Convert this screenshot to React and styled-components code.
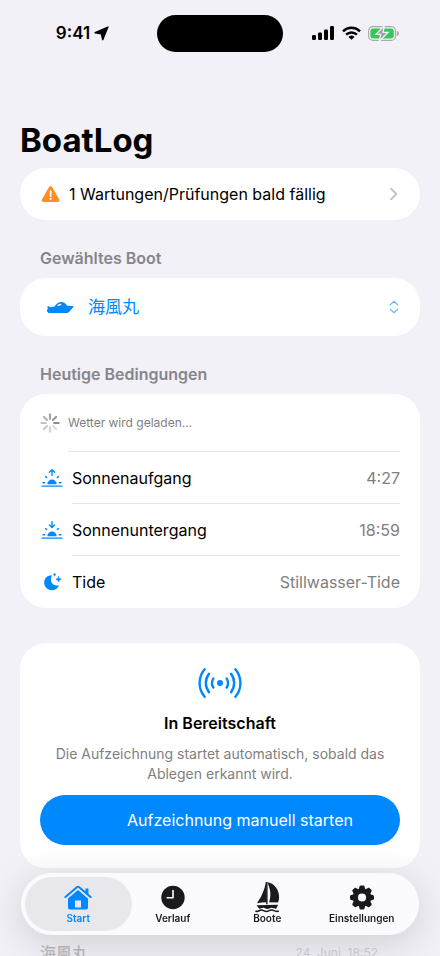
import React from "react";
import styled, { createGlobalStyle } from "styled-components";

const blue = "#0088ff";

const Global = createGlobalStyle`
  *, *::before, *::after { box-sizing: border-box; }
  body {
    margin: 0;
    background: #f2f1f7;
    color: #000;
    font-family: Inter, "Noto Sans CJK JP", sans-serif;
    font-size: 16px;
    line-height: 20px;
  }
  h1, h2, h3, p { margin: 0; padding: 0; }
  svg { display: block; flex: none; }
`;

const Screen = styled.div`
  height: 100vh;
  overflow: hidden;
`;

const StatusBar = styled.header`
  display: grid;
  grid-template-columns: 1fr 126px 1fr;
  align-items: center;
  height: 66px;
  padding: 0 20px;
`;

const Clock = styled.div`
  display: flex;
  align-items: center;
  justify-content: center;
  gap: 4px;
  padding-right: 12px;
  font-size: 17px;
  font-weight: 600;
`;

const Island = styled.div`
  height: 37px;
  border-radius: 19px;
  background: #000;
`;

const Indicators = styled.div`
  display: flex;
  align-items: center;
  justify-content: center;
  gap: 7px;
  padding-left: 8px;
`;

const Content = styled.main`
  display: flex;
  flex-direction: column;
  padding: 54px 20px 0;
`;

const PageTitle = styled.h1`
  height: 48px;
  font-size: 33px;
  line-height: 41px;
  font-weight: 700;
`;

const Card = styled.section`
  background: #fff;
  border-radius: 26px;
`;

const SectionTitle = styled.h2`
  padding: 28px 20px 10px;
  font-size: 16px;
  font-weight: 600;
  color: #86858b;
`;

const AlertRow = styled.a`
  display: flex;
  align-items: center;
  gap: 8px;
  height: 52px;
  padding: 0 20px 0 21px;
  color: inherit;
  text-decoration: none;
`;

const Grow = styled.span`
  flex: 1;
`;

const BoatButton = styled.button`
  display: flex;
  align-items: center;
  gap: 14px;
  width: 100%;
  height: 58px;
  padding: 0 20px 0 26px;
  border: 0;
  background: none;
  color: ${blue};
  font: inherit;
  font-size: 17px;
  text-align: left;
`;

const Row = styled.div`
  display: flex;
  align-items: center;
  gap: ${(p) => p.$gap}px;
  padding: 0 20px;
`;

const RowBody = styled.div`
  display: flex;
  flex: 1;
  align-items: center;
  justify-content: space-between;
  height: ${(p) => p.$height}px;
  border-bottom: ${(p) => (p.$last ? "0" : "1px solid #e6e6e6")};
`;

const Value = styled.span`
  color: #808080;
`;

const Loading = styled.span`
  font-size: 12px;
  color: #808080;
`;

const StandbyCard = styled(Card)`
  display: flex;
  flex-direction: column;
  align-items: center;
  margin-top: 35px;
  padding: 24px 20px 23px;
  text-align: center;
`;

const StandbyTitle = styled.h3`
  margin: 14px 0 11px;
  font-size: 16px;
  font-weight: 600;
`;

const StandbyText = styled.p`
  font-size: 14px;
  color: #808080;
`;

const PrimaryButton = styled.button`
  width: 100%;
  height: 50px;
  margin-top: 11px;
  padding: 0 0 0 40px;
  border: 0;
  border-radius: 25px;
  background: ${blue};
  color: #fff;
  font: inherit;
`;

const TripRow = styled.div`
  display: flex;
  align-items: center;
  justify-content: space-between;
  padding: 75px 42px 0 20px;
`;

const TripName = styled.span`
  font-weight: 500;
  color: #bcbbc0;
`;

const TripDate = styled.time`
  font-size: 12px;
  color: #d0cfd5;
`;

const TabBar = styled.nav`
  position: fixed;
  left: 21px;
  right: 21px;
  bottom: 21px;
  display: grid;
  grid-template-columns: repeat(4, 1fr);
  height: 62px;
  padding: 4px 10px;
  border-radius: 31px;
  background: #fbfafe;
  box-shadow: 0 8px 40px rgba(0, 0, 0, 0.15);
`;

const Tab = styled.a`
  display: flex;
  flex-direction: column;
  align-items: center;
  justify-content: flex-end;
  gap: 1px;
  margin: 0 ${(p) => (p.$active ? "-6px" : "0")};
  padding-bottom: 6px;
  border-radius: 27px;
  background: ${(p) => (p.$active ? "#e8e7ec" : "transparent")};
  color: ${(p) => (p.$active ? blue : "#1a1a1e")};
  font-size: 10px;
  line-height: 13px;
  font-weight: 600;
  text-decoration: none;
`;

const TabIcon = styled.span`
  display: flex;
  align-items: center;
  height: 26px;
`;

const LocationIcon = () => (
  <svg width="15" height="15" viewBox="0 0 15 15" fill="#000" stroke="#000" strokeWidth="1.400" strokeLinejoin="round">
    <path d="M13.900 1.100 8.700 13.700 7.300 7.700 1.100 6.700Z" />
  </svg>
);

const SignalIcon = () => (
  <svg width="23" height="14" viewBox="0 0 23 14" fill="#000">
    <rect x="0" y="9" width="4" height="5" rx="1.200" />
    <rect x="6" y="6.500" width="4" height="7.500" rx="1.200" />
    <rect x="12" y="3.500" width="4" height="10.500" rx="1.200" />
    <rect x="18" y="0" width="4" height="14" rx="1.200" />
  </svg>
);

const WifiIcon = () => (
  <svg width="19" height="14" viewBox="0 0 19 14" fill="none" stroke="#000" strokeWidth="2.500">
    <path d="M1 5.300a12.200 12.200 0 0 1 17 0" />
    <path d="M4.100 8.600a7.800 7.800 0 0 1 10.800 0" />
    <path d="M9.500 13.800 6.500 10.900a4.400 4.400 0 0 1 6 0Z" fill="#000" stroke="none" />
  </svg>
);

const BatteryIcon = () => (
  <svg width="32" height="15" viewBox="0 0 32 15">
    <rect x=".6" y=".6" width="27" height="13.800" rx="4.500" fill="none" stroke="#a9a9ad" strokeWidth="1.200" />
    <rect x="2.400" y="2.400" width="23.400" height="10.200" rx="3" fill="#34c759" />
    <path d="M29 5v5c1.200-.3 2-1.300 2-2.500S30.200 5.300 29 5Z" fill="#a9a9ad" />
    <path d="M16.300-.2 8 8.300h4.700l-1.500 7 8.800-8.900h-4.900Z" fill="#a0a0a3" stroke="#f2f1f7" strokeWidth="1.300" />
  </svg>
);

const WarningIcon = () => (
  <svg width="20" height="17" viewBox="0 0 20 17">
    <path d="M7.900 1.300a1.900 1.900 0 0 1 3.400 0l7 12.200c.7 1.300-.1 2.500-1.600 2.500H2.500C1 16 .2 14.800.9 13.500Z" fill="#ff8d28" />
    <path d="M9.600 5.200v5" stroke="#fff" strokeWidth="1.700" strokeLinecap="round" />
    <circle cx="9.600" cy="12.900" r="1.050" fill="#fff" />
  </svg>
);

const ChevronIcon = () => (
  <svg width="12" height="14" viewBox="0 0 12 14" fill="none" stroke="#c2c2c6" strokeWidth="1.900" strokeLinecap="round" strokeLinejoin="round">
    <path d="m3 1.700 5.300 5.300L3 12.300" />
  </svg>
);

const UpDownIcon = () => (
  <svg width="12" height="14" viewBox="0 0 12 14" fill="none" stroke="#66b8ff" strokeWidth="1.200" strokeLinecap="round" strokeLinejoin="round">
    <path d="m2.200 4.900 3.800-3.700 3.800 3.700M2.200 9.100 6 12.800l3.800-3.700" />
  </svg>
);

const MotorboatIcon = () => (
  <svg width="28" height="14" viewBox="0 0 28 14" fill={blue}>
    <path fillRule="evenodd" d="M1.200 6.500 3 6.300l1.200 1 4.400-.9c2-2.500 3.800-4.200 6.800-4.300 2.500 0 4.300 1.500 5.700 3.700l6.300.3c.3 0 .4.300.2.500-1.600 2-3 4.300-4.600 5.300H1.400l-.5-2.100 1-.8Zm9.600-.6 3.600-.3 1.200-1.700c-1.900-.3-3.500.5-4.800 2Z" />
    <path d="M1.500 11.500h21.800l-1.700 1.600H2.500Z" />
  </svg>
);

const Spinner = () => {
  const tones = ["#a6a6a6", "#999", "#8b8b8d", "#dcdcdc", "#d5d5d5", "#cbcbcb", "#c2c2c2", "#b5b5b5"];
  return (
    <svg width="20" height="20" viewBox="0 0 20 20" strokeWidth="2.200" strokeLinecap="round">
      {tones.map((tone, i) => (
        <path key={tone} d="M10 1.400v4.400" stroke={tone} transform={`rotate(${i * 45} 10 10)`} />
      ))}
    </svg>
  );
};

const SunIcon = ({ down }) => (
  <svg width="23" height="18" viewBox="0 0 23 18" fill="none" stroke={blue} strokeWidth="1.400" strokeLinecap="round" strokeLinejoin="round">
    <path d="M2 17.100h20" />
    <path d="M7.300 15.300a4.700 4.700 0 1 1 9.400 0Z" fill={blue} stroke="none" />
    <path d="M3 13.700h1.700M19.300 13.700H21M5.600 7.500l1.100 1.100M18.400 7.500l-1.100 1.100" />
    <path d={down ? "M12 .8v5.600M9.400 4.100 12 6.600l2.600-2.500" : "M12 6.600V1M9.400 3.300 12 .8l2.600 2.500"} />
  </svg>
);

const MoonIcon = () => (
  <svg width="23" height="18" viewBox="-1 0 23 18" fill={blue}>
    <path d="M10.200 2.300C6.200 2.400 3.200 5.700 3.200 9.600c0 4.200 3.300 7.600 7.500 7.600 3.300 0 6.100-1.800 7.100-4.500.1-.4-.2-.6-.5-.5-5 1.400-9-3.100-6.600-9.200.1-.4-.1-.7-.5-.7Z" />
    <path d="M17.600 3.400c.4 1.900.7 2.300 2.700 2.800-2 .5-2.300.9-2.700 2.800-.4-1.900-.7-2.300-2.700-2.800 2-.5 2.300-.9 2.700-2.800Z" stroke={blue} strokeWidth=".7" />
    <path d="M13.600.2c.2 1 .5 1.300 1.500 1.500-1 .2-1.300.5-1.500 1.500-.2-1-.5-1.300-1.500-1.500 1-.2 1.300-.5 1.500-1.500Z" stroke={blue} strokeWidth=".5" />
  </svg>
);

const RadioIcon = () => (
  <svg width="46" height="32" viewBox="0 0 46 32" fill="none" stroke={blue} strokeWidth="2.400" strokeLinecap="round">
    <circle cx="23" cy="16" r="3" fill={blue} stroke="none" />
    <path d="M16.400 11.400a8.600 8.600 0 0 0 0 9.200M29.600 11.400a8.600 8.600 0 0 1 0 9.200" />
    <path d="M12 6.800a15 15 0 0 0 0 18.400M34 6.800a15 15 0 0 1 0 18.400" />
    <path d="M7.600 2.200a21.500 21.500 0 0 0 0 27.600M38.400 2.200a21.500 21.500 0 0 1 0 27.600" />
  </svg>
);

const HouseIcon = () => (
  <svg width="28" height="26" viewBox="0 0 28 26" fill={blue}>
    <path d="M1.400 12 13.100 2.100c.6-.5 1.200-.5 1.800 0L26.600 12" fill="none" stroke={blue} strokeWidth="2" strokeLinecap="round" />
    <path d="M21.500 3.400h2.900v7l-2.900-2.500Z" />
    <path fillRule="evenodd" d="M14 5 24 13.400v9c0 1.200-.8 2-2 2H6c-1.200 0-2-.8-2-2v-9Zm-3 10.500v7h6v-7Z" />
  </svg>
);

const ClockIcon = () => (
  <svg width="26" height="26" viewBox="0 0 26 26">
    <circle cx="13" cy="12.500" r="11.700" fill="#1a1a1e" />
    <path d="M13 5.500v7.300H7.200" fill="none" stroke="#fff" strokeWidth="1.600" strokeLinecap="round" strokeLinejoin="round" />
  </svg>
);

const SailboatIcon = () => (
  <svg width="27" height="33" viewBox="0 1 28 34" fill="#1a1a1e">
    <path d="M14.200 1.200C21.400 2.200 26.500 10 26 17.500c0 2-.6 3.600-1.200 4.600l-9.200-.2c2-5 1.800-12-.4-17Z" />
    <path d="M13 1v21c-3.300 0-6.500.3-9.900.9C7 17.500 11 10 12.200 1Z" />
    <path d="M12.600 1h1.500v23h-1.500Z" />
    <path d="m2.600 25 22.400-.5-1.900 3.900c-1.500.7-2.700-.7-4.500-.7-2.200 0-2.700 1.300-4.600 1.300s-2.500-1.300-4.500-1.300c-1.700 0-2.600 1.100-4.100.9Z" />
    <path d="M2 31.200c2.200.8 3.300-.9 5.300-1.300 2-.3 3.200 1.600 5.600 1.600s3.300-1.900 5.600-1.600c2.200.3 3.600 2 6.700 1.300" fill="none" stroke="#1a1a1e" strokeWidth="1.600" strokeLinecap="round" />
  </svg>
);

const GearIcon = () => (
  <svg width="26" height="26" viewBox="0 0 26 26">
    <g fill="#1a1a1e">
      {[0, 45, 90, 135, 180, 225, 270, 315].map((a) => (
        <path key={a} d="m9.700 4.500.8-2.900c.2-.7.600-1.100 1.300-1.100h2.400c.7 0 1.100.4 1.300 1.100l.8 2.900Z" transform={`rotate(${a} 13 12.500)`} />
      ))}
    </g>
    <circle cx="13" cy="12.500" r="6.700" fill="none" stroke="#1a1a1e" strokeWidth="5.200" />
  </svg>
);

const conditions = [
  { icon: <SunIcon />, label: "Sonnenaufgang", value: "4:27" },
  { icon: <SunIcon down />, label: "Sonnenuntergang", value: "18:59" },
  { icon: <MoonIcon />, label: "Tide", value: "Stillwasser-Tide" },
];

const tabs = [
  { icon: <HouseIcon />, label: "Start" },
  { icon: <ClockIcon />, label: "Verlauf" },
  { icon: <SailboatIcon />, label: "Boote" },
  { icon: <GearIcon />, label: "Einstellungen" },
];

export default function App() {
  return (
    <Screen>
      <Global />
      <StatusBar>
        <Clock>9:41<LocationIcon /></Clock>
        <Island />
        <Indicators><SignalIcon /><WifiIcon /><BatteryIcon /></Indicators>
      </StatusBar>
      <Content>
        <PageTitle>BoatLog</PageTitle>
        <Card>
          <AlertRow href="#wartung">
            <WarningIcon />
            <Grow>1 Wartungen/Prüfungen bald fällig</Grow>
            <ChevronIcon />
          </AlertRow>
        </Card>
        <SectionTitle>Gewähltes Boot</SectionTitle>
        <Card>
          <BoatButton type="button">
            <MotorboatIcon />
            <Grow>海風丸</Grow>
            <UpDownIcon />
          </BoatButton>
        </Card>
        <SectionTitle>Heutige Bedingungen</SectionTitle>
        <Card>
          <Row $gap={8}>
            <Spinner />
            <RowBody $height={58}><Loading>Wetter wird geladen…</Loading></RowBody>
          </Row>
          {conditions.map((c, i) => (
            <Row key={c.label} $gap={9}>
              {c.icon}
              <RowBody $height={52} $last={i === conditions.length - 1}>
                <span>{c.label}</span>
                <Value>{c.value}</Value>
              </RowBody>
            </Row>
          ))}
        </Card>
        <StandbyCard>
          <RadioIcon />
          <StandbyTitle>In Bereitschaft</StandbyTitle>
          <StandbyText>Die Aufzeichnung startet automatisch, sobald das Ablegen erkannt wird.</StandbyText>
          <PrimaryButton type="button">Aufzeichnung manuell starten</PrimaryButton>
        </StandbyCard>
        <TripRow>
          <TripName>海風丸</TripName>
          <TripDate>24. Juni, 18:52</TripDate>
        </TripRow>
      </Content>
      <TabBar>
        {tabs.map((t, i) => (
          <Tab key={t.label} href={`#${t.label}`} $active={i === 0}>
            <TabIcon>{t.icon}</TabIcon>
            {t.label}
          </Tab>
        ))}
      </TabBar>
    </Screen>
  );
}
